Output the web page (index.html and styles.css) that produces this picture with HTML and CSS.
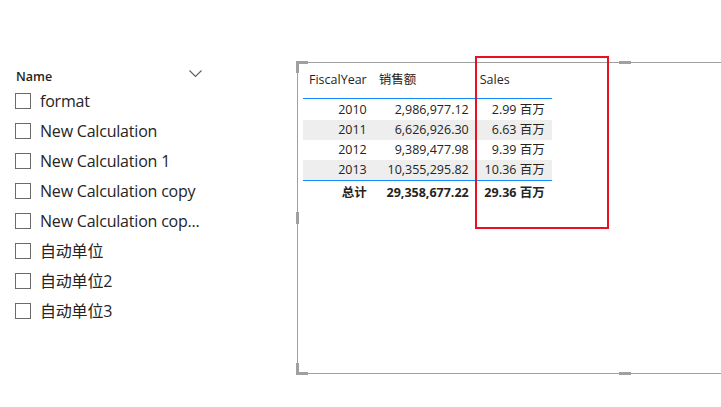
FILE: index.html
```html
<!DOCTYPE html>
<html>
<head>
<meta charset="utf-8">
<link rel="stylesheet" href="styles.css">
</head>
<body>
    <div class="page">
        <div class="slicer">
            <div class="slicer-head">
                <span>Name</span>
                <svg class="chevron" width="13" height="8" viewBox="0 0 13 8"><path d="M0.5 0.5 L6.5 6.5 L12.5 0.5" fill="none" stroke="#605e5c" stroke-width="1.1"/></svg>
            </div>
            <div class="item"><span class="box"></span><span class="label">format</span></div>
            <div class="item"><span class="box"></span><span class="label">New Calculation</span></div>
            <div class="item"><span class="box"></span><span class="label">New Calculation 1</span></div>
            <div class="item"><span class="box"></span><span class="label">New Calculation copy</span></div>
            <div class="item"><span class="box"></span><span class="label">New Calculation cop...</span></div>
            <div class="item"><span class="box"></span><span class="label">自动单位</span></div>
            <div class="item"><span class="box"></span><span class="label">自动单位2</span></div>
            <div class="item"><span class="box"></span><span class="label">自动单位3</span></div>
        </div>
        <div class="visual">
            <span class="handle corner-tl"></span>
            <span class="handle corner-bl"></span>
            <span class="handle mid-left"></span>
            <span class="handle mid-top"></span>
            <span class="handle mid-bottom"></span>
            <table class="matrix">
                <thead>
                    <tr><th>FiscalYear</th><th>销售额</th><th>Sales</th></tr>
                </thead>
                <tbody>
                    <tr><td>2010</td><td>2,986,977.12</td><td>2.99 百万</td></tr>
                    <tr class="alt"><td>2011</td><td>6,626,926.30</td><td>6.63 百万</td></tr>
                    <tr><td>2012</td><td>9,389,477.98</td><td>9.39 百万</td></tr>
                    <tr class="alt last"><td>2013</td><td>10,355,295.82</td><td>10.36 百万</td></tr>
                </tbody>
                <tfoot>
                    <tr><td>总计</td><td>29,358,677.22</td><td>29.36 百万</td></tr>
                </tfoot>
            </table>
            <div class="highlight"></div>
        </div>
    </div>
</body>
</html>
```

FILE: styles.css
```css
html, body {
    margin: 0;
    padding: 0;
    width: 100%;
    height: 100%;
    overflow: hidden;
    background: white;
}
body {
    font-family: "Open Sans", "Noto Sans CJK SC", sans-serif;
    color: #252423;
}
.page {
    display: flex;
    align-items: flex-start;
}
.slicer {
    width: 282px;
    padding: 66px 0 0 15px;
    flex-shrink: 0;
}
.slicer-head {
    width: 186px;
    height: 20px;
    display: flex;
    justify-content: space-between;
    align-items: center;
    padding-left: 1px;
    font-size: 12.5px;
    font-weight: 600;
}
.chevron {
    margin-top: -5px;
}
.item {
    height: 30px;
    display: flex;
    align-items: center;
    gap: 9px;
    font-size: 16px;
    letter-spacing: -0.2px;
}
.label {
    line-height: 20px;
}
.box {
    width: 14px;
    height: 14px;
    border: 1px solid #6b6b6b;
    flex-shrink: 0;
}
.visual {
    position: relative;
    margin-top: 62px;
    width: 430px;
    height: 312px;
    border: 1px solid #a0a0a0;
    border-right: none;
    padding: 5px 0 0 5px;
    box-sizing: border-box;
}
.handle {
    position: absolute;
    background: #a0a0a0;
}
.corner-tl, .corner-bl {
    width: 9px;
    height: 9px;
    background: none;
    left: -2px;
}
.corner-tl {
    top: -2px;
    border-top: 3px solid #a0a0a0;
    border-left: 3px solid #a0a0a0;
}
.corner-bl {
    bottom: -2px;
    border-bottom: 3px solid #a0a0a0;
    border-left: 3px solid #a0a0a0;
}
.mid-left {
    left: -2px;
    top: 149px;
    width: 3px;
    height: 12px;
}
.mid-top, .mid-bottom {
    left: 321px;
    width: 12px;
    height: 3px;
}
.mid-top {
    top: -2px;
}
.mid-bottom {
    bottom: -2px;
}
.matrix {
    border-collapse: collapse;
    font-size: 12.5px;
    line-height: 20px;
}
.matrix th, .matrix td {
    padding: 0 6px;
    text-align: right;
    font-weight: normal;
    white-space: nowrap;
}
.matrix th {
    text-align: left;
    padding-top: 2px;
    padding-bottom: 8px;
    border-bottom: 1px solid #118dff;
}
.matrix tbody tr:first-child td {
    padding-top: 1px;
}
.matrix tr.last td {
    border-bottom: 1px solid #118dff;
}
.matrix tr.alt {
    background: #eeeeee;
}
.matrix tfoot td {
    font-weight: bold;
    padding-top: 2px;
}
.matrix th:nth-child(1), .matrix td:nth-child(1) {
    width: 57px;
}
.matrix th:nth-child(2), .matrix td:nth-child(2) {
    width: 90px;
}
.matrix th:nth-child(3), .matrix td:nth-child(3) {
    width: 65px;
    padding-left: 5px;
    padding-right: 7px;
}
.highlight {
    position: absolute;
    left: 177px;
    top: -7px;
    width: 130px;
    height: 169px;
    border: 2px solid #e81123;
}
```
